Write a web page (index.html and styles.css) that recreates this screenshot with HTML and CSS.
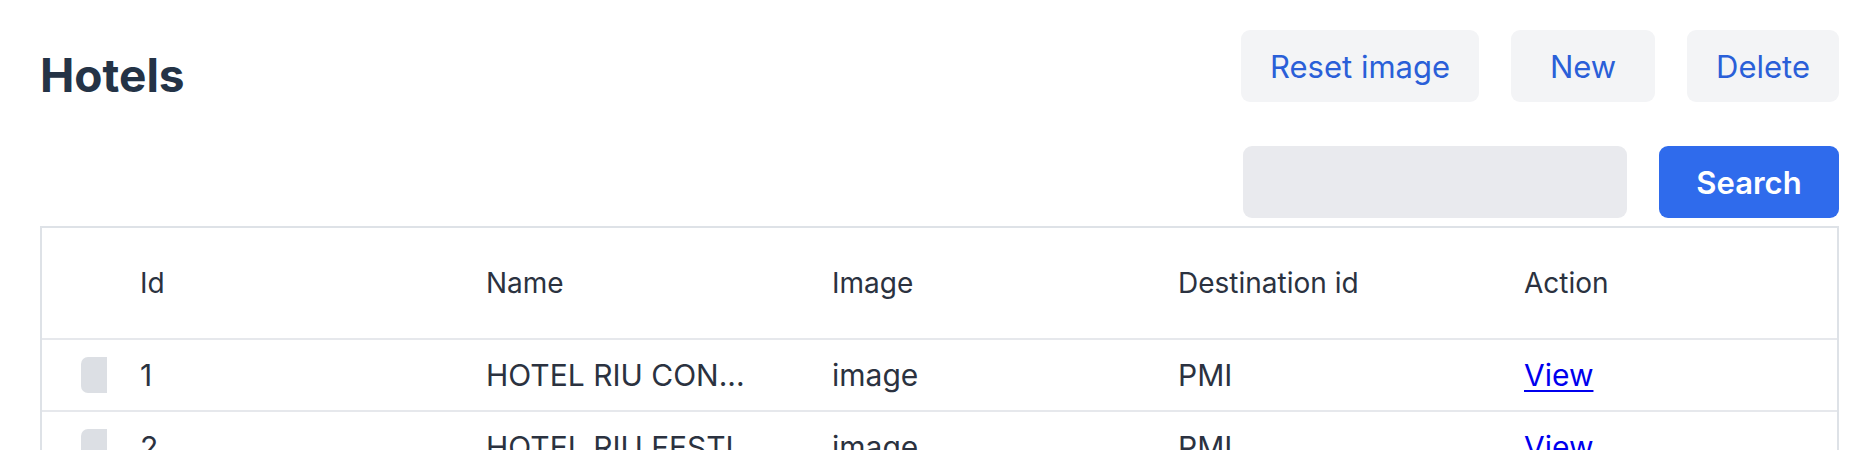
FILE: index.html
```html
<!DOCTYPE html>
<html lang="en">
<head>
<meta charset="utf-8">
<title>Hotels</title>
<link rel="stylesheet" href="styles.css">
</head>
<body>
<div class="page">
  <div class="top">
    <h1 class="title">Hotels</h1>
    <div class="actions">
      <button class="btn">Reset image</button>
      <button class="btn btn-new">New</button>
      <button class="btn">Delete</button>
    </div>
  </div>
  <div class="search-row">
    <input class="search-input" type="text">
    <button class="btn-search">Search</button>
  </div>
  <div class="table">
    <div class="row head">
      <div class="cell check"></div>
      <div class="cell">Id</div>
      <div class="cell">Name</div>
      <div class="cell">Image</div>
      <div class="cell">Destination id</div>
      <div class="cell">Action</div>
    </div>
    <div class="row">
      <div class="cell check"><span class="box"></span></div>
      <div class="cell">1</div>
      <div class="cell name">HOTEL RIU CON...</div>
      <div class="cell">image</div>
      <div class="cell">PMI</div>
      <div class="cell"><a href="#" class="link">View</a></div>
    </div>
    <div class="row">
      <div class="cell check"><span class="box"></span></div>
      <div class="cell">2</div>
      <div class="cell name">HOTEL RIU FESTI...</div>
      <div class="cell">image</div>
      <div class="cell">PMI</div>
      <div class="cell"><a href="#" class="link">View</a></div>
    </div>
  </div>
</div>
</body>
</html>
```

FILE: styles.css
```css
* { box-sizing: border-box; }
html, body { margin: 0; padding: 0; background: #fff; }
body {
  font-family: Inter, "Noto Sans", sans-serif;
  color: #2b3240;
}
.page {
  padding: 30px 37px 0 40px;
}
.top {
  display: flex;
  justify-content: space-between;
  align-items: flex-start;
}
.title {
  margin: 22px 0 0 0;
  font-size: 46px;
  line-height: 46px;
  font-weight: 700;
  color: #243346;
}
.actions {
  display: flex;
  gap: 32px;
}
.btn {
  height: 72px;
  padding: 0 29px;
  border: none;
  border-radius: 9px;
  background: #f3f4f6;
  color: #2a5fd8;
  font-family: Inter, "Noto Sans", sans-serif;
  font-size: 31px;
  font-weight: 400;
}
.btn-new { min-width: 144px; }
.search-row {
  display: flex;
  justify-content: flex-end;
  gap: 32px;
  margin-top: 44px;
}
.search-input {
  width: 384px;
  height: 72px;
  border: none;
  border-radius: 9px;
  background: #e9eaee;
}
.btn-search {
  width: 180px;
  height: 72px;
  border: none;
  border-radius: 9px;
  background: #2f6bec;
  color: #fff;
  font-family: Inter, "Noto Sans", sans-serif;
  font-size: 31px;
  font-weight: 600;
}
.table {
  margin-top: 8px;
  border: 2px solid #dee2e7;
  border-bottom: none;
}
.row {
  display: grid;
  grid-template-columns: 98px 346px 346px 346px 346px 1fr;
  height: 72px;
  border-top: 2px solid #e6e8ec;
  align-items: center;
  font-size: 30px;
}
.row.head {
  height: 110px;
  border-top: none;
  font-size: 28px;
}
.cell {
  white-space: nowrap;
  overflow: hidden;
}
.check {
  padding-left: 39px;
  display: flex;
  align-items: center;
}
.box {
  display: block;
  width: 26px;
  height: 36px;
  background: #dcdfe4;
  border-radius: 7px 0 0 7px;
}
.link {
  color: #0000ee;
  text-decoration: underline;
  text-underline-offset: 4px;
  text-decoration-thickness: 2px;
}
```
